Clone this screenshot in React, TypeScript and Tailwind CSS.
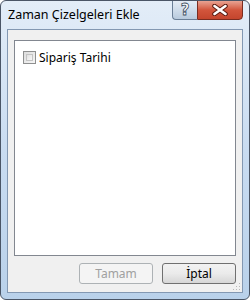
export default function App() {
  return (
    <div
      className="w-[250px] h-[300px] flex flex-col rounded-[6px] border border-[#4a5566] bg-gradient-to-b from-[#e3edf8] via-[#c9dcf1] to-[#b9d1ea] overflow-hidden"
      style={{ fontFamily: '"Noto Sans", "Liberation Sans", sans-serif' }}
    >
      {/* title bar */}
      <div className="h-[28px] flex items-start justify-between">
        <div className="pl-[7px] pt-[6px] text-[12.5px] leading-[16px] text-black">Zaman Çizelgeleri Ekle</div>
        <div className="flex mr-[6px] -mt-px">
          <div className="w-[25px] h-[20px] flex items-center justify-center rounded-bl-[4px] border border-[#6a7e96] border-r-0 bg-gradient-to-b from-[#e4ecf5] via-[#cfdcea] to-[#b8cadd]">
            <span
              className="text-[15px] leading-none font-bold text-white"
              style={{ fontFamily: '"DejaVu Sans", sans-serif', WebkitTextStroke: "0.8px #3d4c5e" }}
            >
              ?
            </span>
          </div>
          <div className="w-[46px] h-[20px] flex items-center justify-center rounded-br-[4px] border border-[#7a2c20] bg-gradient-to-b from-[#e8a393] via-[#d2553c] to-[#c4452d]">
            <svg width="16" height="12" viewBox="0 0 16 12">
              <path d="M2.5 2 L13.5 10 M13.5 2 L2.5 10" stroke="#5a1c12" strokeWidth="4.6" strokeLinecap="round" />
              <path d="M2.5 2 L13.5 10 M13.5 2 L2.5 10" stroke="#ffffff" strokeWidth="2.6" strokeLinecap="round" />
            </svg>
          </div>
        </div>
      </div>

      {/* client area */}
      <div className="relative mx-[6px] h-[264px] border border-[#8398b2] bg-[#f0f0f0] flex flex-col px-[6px] pt-[10px] pb-[8px]">
        <div className="h-[216px] border border-[#828790] bg-white px-[8px] pt-[9px]">
          <div className="flex items-center gap-[3px]">
            <div className="w-[13px] h-[13px] border border-[#8e8f8f] bg-gradient-to-br from-[#dcdcdc] to-[#f6f6f6] p-[2px]">
              <div className="w-full h-full border border-[#c4c4c4] bg-gradient-to-br from-[#e0e0e0] to-[#f8f8f8]" />
            </div>
            <span className="text-[12px] leading-[15px] text-black">Sipariş Tarihi</span>
          </div>
        </div>
        <div className="flex-1" />
        <div className="flex justify-end gap-[9px]">
          <div className="w-[74px] h-[21px] rounded-[3px] border border-[#adb2b5] bg-[#f4f4f4] flex items-center justify-center text-[12px] text-[#a0a0a0]">
            Tamam
          </div>
          <div className="w-[74px] h-[21px] rounded-[3px] border border-[#707070] bg-gradient-to-b from-[#f2f2f2] via-[#ebebeb] to-[#d6d6d6] flex items-center justify-center text-[12px] text-black">
            İptal
          </div>
        </div>
        {/* resize grip */}
        <svg className="absolute right-[1px] bottom-[1px]" width="8" height="8" viewBox="0 0 8 8">
          <rect x="6" y="0" width="1" height="1" fill="#b8b8b8" />
          <rect x="3" y="3" width="1" height="1" fill="#b8b8b8" />
          <rect x="6" y="3" width="1" height="1" fill="#b8b8b8" />
          <rect x="0" y="6" width="1" height="1" fill="#b8b8b8" />
          <rect x="3" y="6" width="1" height="1" fill="#b8b8b8" />
          <rect x="6" y="6" width="1" height="1" fill="#b8b8b8" />
        </svg>
      </div>
    </div>
  );
}
